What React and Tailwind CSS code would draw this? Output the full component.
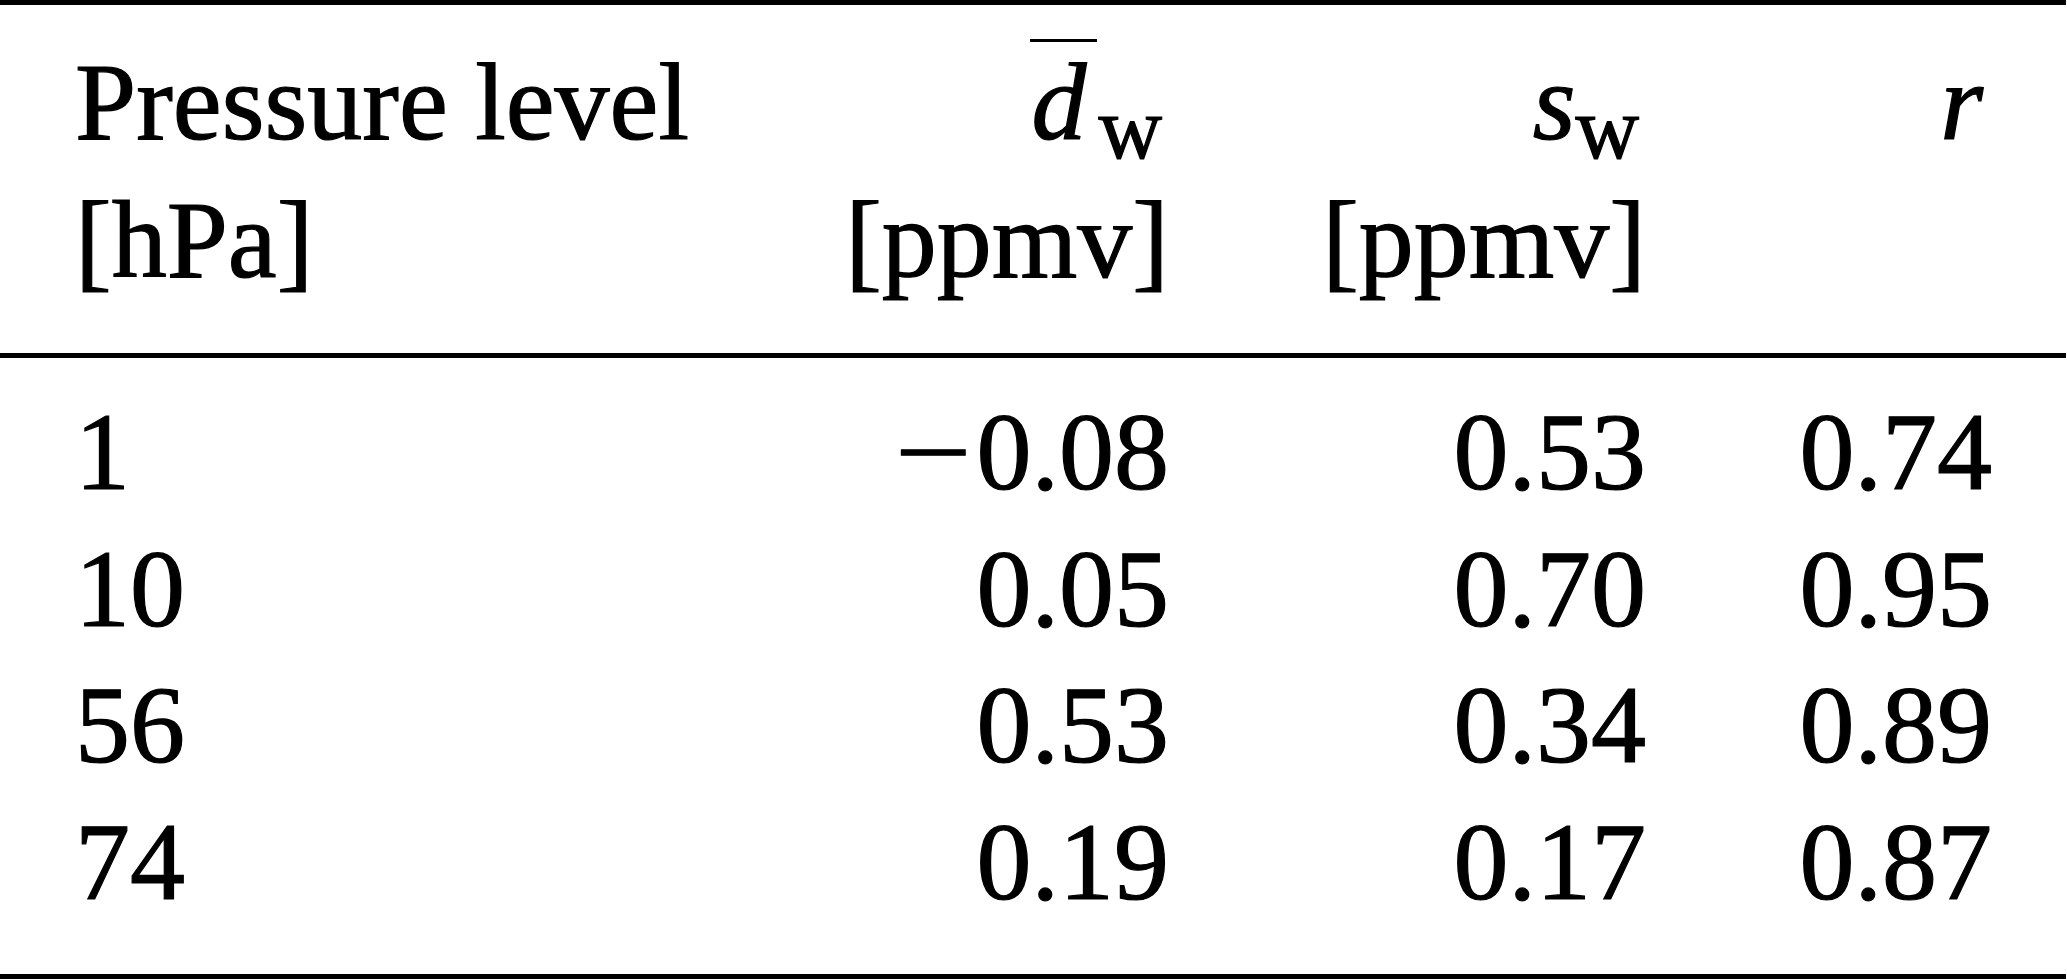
const rows = [
  { level: '1', mean: '0.08', negative: true, sd: '0.53', r: '0.74' },
  { level: '10', mean: '0.05', sd: '0.70', r: '0.95' },
  { level: '56', mean: '0.53', sd: '0.34', r: '0.89' },
  { level: '74', mean: '0.19', sd: '0.17', r: '0.87' },
];

const Rule = () => <div className="h-[5px] w-[2066px] bg-black" />;

const Sub = ({ children, extra = '' }) => (
  <span className={`relative top-[19px] text-[88px] leading-none not-italic pr-[7px] ${extra}`}>
    {children}
  </span>
);

const App = () => {
  return (
    <div className="w-[2067px] h-[980px] bg-white text-black text-[110px] font-[family-name:'Liberation_Serif',serif] [-webkit-text-stroke:1.2px_black]">
      <Rule />
      <div className="grid grid-cols-[700px_469px_477px_346px] pr-[75px] pt-[28px] pb-[44px] leading-[138px]">
        <div className="pl-[75px] whitespace-nowrap">
          <div>Pressure level</div>
          <div>[hPa]</div>
        </div>
        <div className="text-right whitespace-nowrap">
          <div className="flex justify-end items-baseline">
            <span className="relative italic inline-block">
              d
              <span className="absolute left-[-1px] top-[6px] block w-[67px] h-[3px] bg-black" />
            </span>
            <Sub extra="ml-[12px]">w</Sub>
          </div>
          <div>[ppmv]</div>
        </div>
        <div className="text-right whitespace-nowrap">
          <div>
            <span className="italic">s</span>
            <Sub>w</Sub>
          </div>
          <div>[ppmv]</div>
        </div>
        <div className="text-right whitespace-nowrap">
          <div>
            <span className="italic pr-[9px]">r</span>
          </div>
        </div>
      </div>
      <Rule />
      <div className="grid grid-cols-[700px_469px_477px_346px] pr-[75px] pt-[26px] pb-[44px] leading-[136.5px]">
        {rows.map((row) => (
          <div key={row.level} className="contents">
            <div className="pl-[75px]">{row.level}</div>
            <div className="text-right whitespace-nowrap">
              {row.negative && <span className="inline-block scale-x-[1.24] mr-[12px]">−</span>}
              {row.mean}
            </div>
            <div className="text-right">{row.sd}</div>
            <div className="text-right">{row.r}</div>
          </div>
        ))}
      </div>
      <Rule />
    </div>
  );
};

export default App;
